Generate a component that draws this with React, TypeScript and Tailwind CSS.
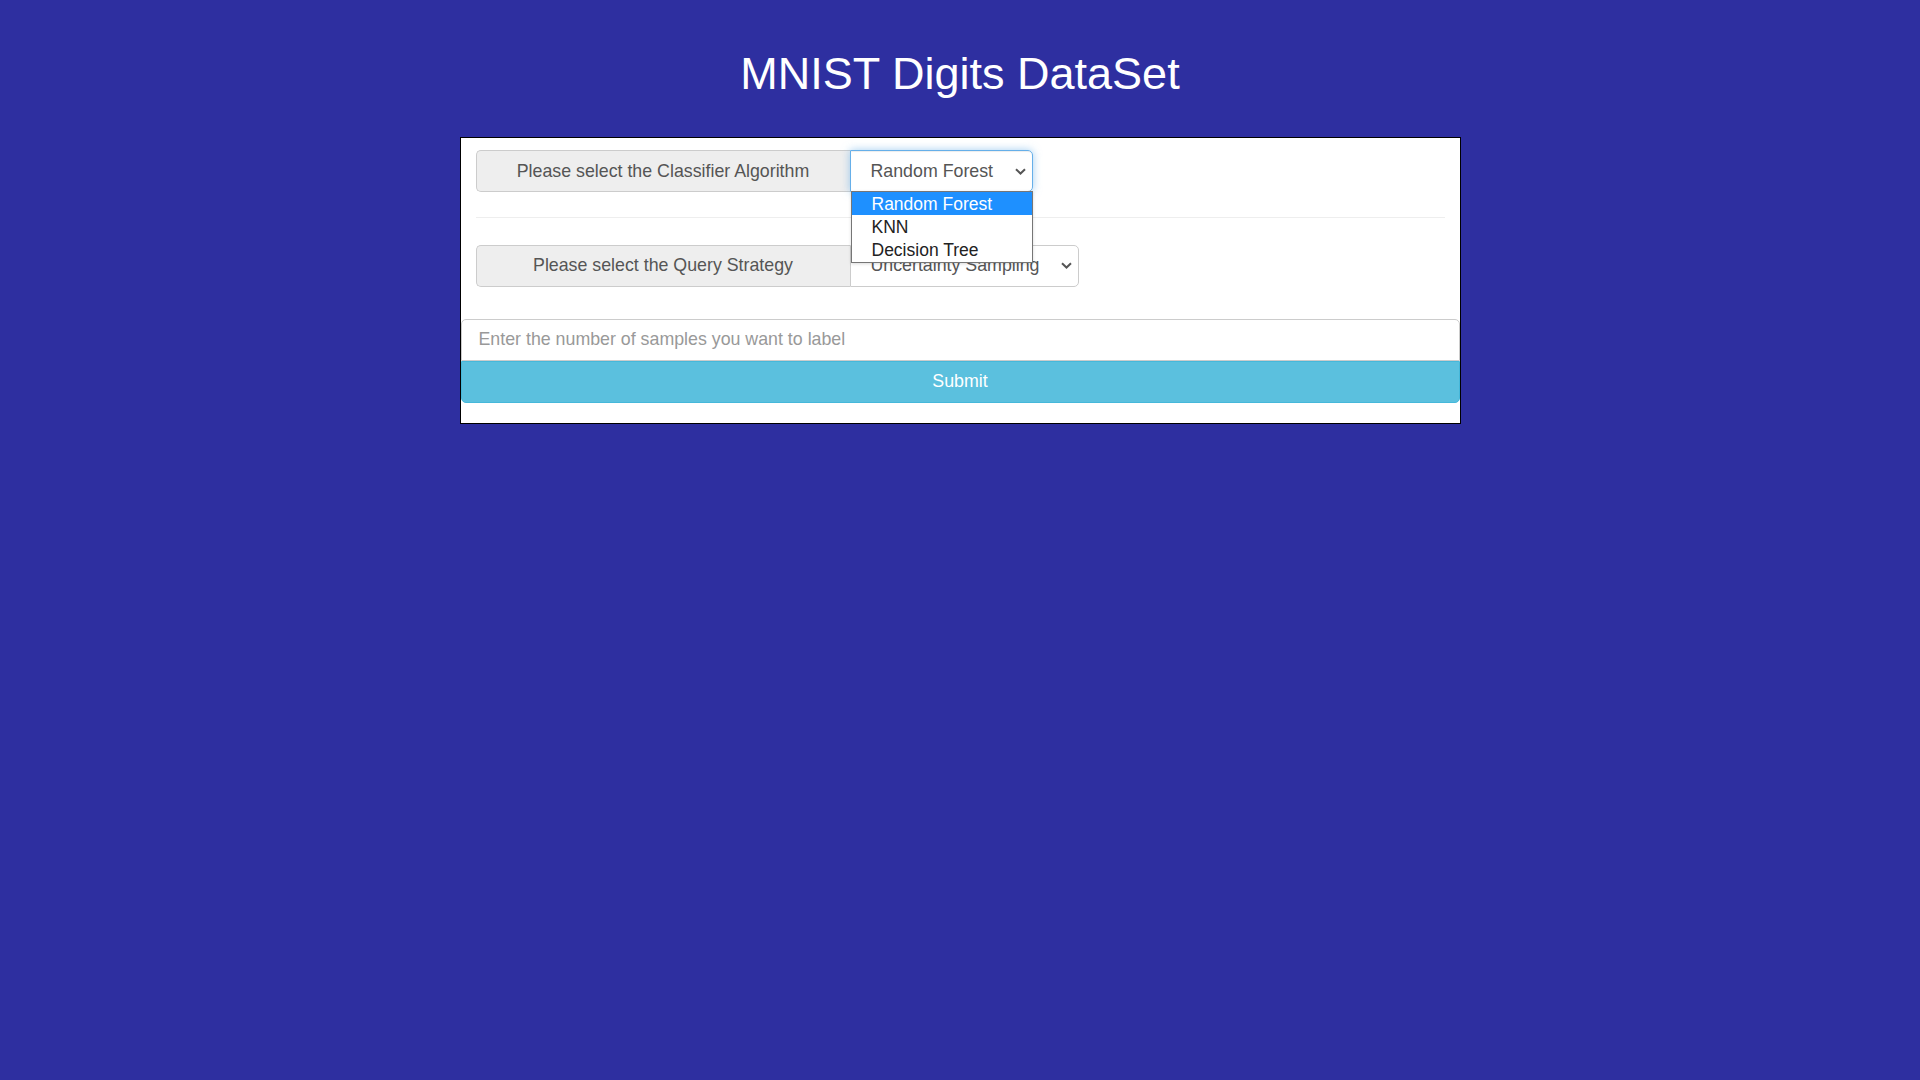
import React from 'react';

const classifiers = ['Random Forest', 'KNN', 'Decision Tree'];

function Chevron() {
  return (
    <svg width="11" height="7" viewBox="0 0 11 7" className="shrink-0">
      <path d="M1 1.2l4.5 4.3 4.5-4.3" fill="none" stroke="#555" strokeWidth="2" />
    </svg>
  );
}

export default function App() {
  return (
    <div
      className="min-h-screen bg-[#2e2fa0] pt-[49px]"
      style={{ fontFamily: '"Liberation Sans", Arial, sans-serif' }}
    >
      <h1 className="text-center text-[45px] leading-[1.1] font-normal text-white">MNIST Digits DataSet</h1>

      <div className="mx-auto mt-[38px] w-[1001px] border border-black bg-white pb-[20px]">
        <div className="px-[15px] pt-[12.5px]">
          {/* classifier */}
          <div className="flex h-[42px] text-[17.8px]">
            <div className="flex w-[374px] items-center justify-center rounded-l-[5px] border border-r-0 border-[#ccc] bg-[#eee] text-[#555]">
              Please select the Classifier Algorithm
            </div>
            <div className="relative z-10 flex w-[183px] items-center justify-between rounded-r-[5px] border border-[#66afe9] pl-[20px] pr-[6px] text-[#555] shadow-[inset_0_1px_1px_rgba(0,0,0,.075),0_0_8px_rgba(102,175,233,.6)]">
              <span>Random Forest</span>
              <Chevron />
              <ul className="absolute top-full left-0 w-[182px] border border-[#767676] bg-white text-[17.5px] shadow-[0_1px_3px_rgba(0,0,0,.15)]">
                {classifiers.map((c, i) => (
                  <li
                    key={c}
                    className={`flex h-[23.4px] items-center pl-[20px] ${
                      i === 0 ? 'bg-[#1e90ff] text-white' : 'text-[#222]'
                    }`}
                  >
                    {c}
                  </li>
                ))}
              </ul>
            </div>
          </div>

          <hr className="mt-[25px] mb-[26.5px] border-t border-[#eee]" />

          {/* query strategy */}
          <div className="flex h-[42px] text-[17.8px]">
            <div className="flex w-[374px] items-center justify-center rounded-l-[5px] border border-r-0 border-[#ccc] bg-[#eee] text-[#555]">
              Please select the Query Strategy
            </div>
            <div className="flex w-[229px] items-center justify-between rounded-r-[5px] border border-[#ccc] pl-[20px] pr-[6px] text-[#555]">
              <span>Uncertainty Sampling</span>
              <Chevron />
            </div>
          </div>
        </div>

        <div className="mt-[32px]">
          <input
            type="text"
            placeholder="Enter the number of samples you want to label"
            className="block h-[42px] w-full rounded-t-[5px] border border-[#ccc] px-[17px] text-[17.8px] text-[#555] outline-none placeholder:text-[#999]"
          />
          <button className="block h-[42px] w-full rounded-b-[5px] border border-[#46b8da] bg-[#5bc0de] text-[17.8px] text-white">
            Submit
          </button>
        </div>
      </div>
    </div>
  );
}
